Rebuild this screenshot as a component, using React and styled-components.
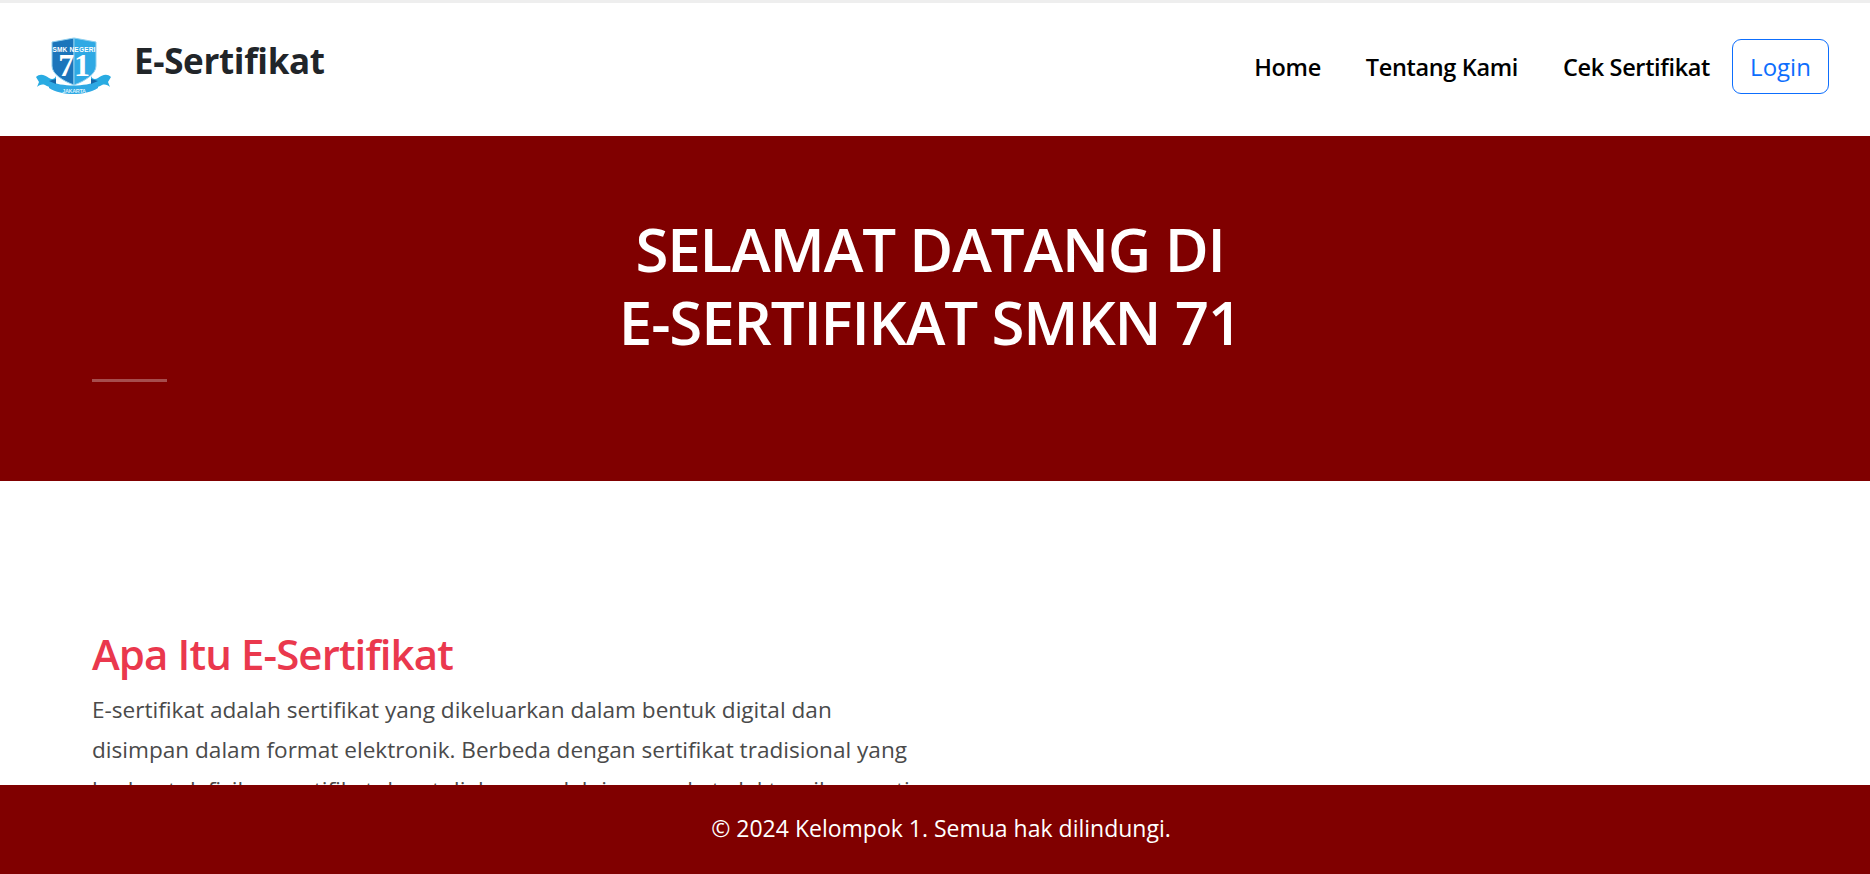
import React from 'react';
import styled, { createGlobalStyle } from 'styled-components';

const GlobalStyle = createGlobalStyle`
  * {
    box-sizing: border-box;
  }
  html,
  body {
    margin: 0;
    padding: 0;
    background-color: #fff;
    font-family: 'Open Sans', 'Noto Sans', sans-serif;
    scrollbar-width: none;
  }
  body::-webkit-scrollbar {
    display: none;
  }
`;

const Navbar = styled.nav`
  display: flex;
  align-items: center;
  justify-content: space-between;
  height: 136px;
  padding: 0 41px 0 36px;
  background-color: #fff;
  border-top: 3px solid #eeeeee;
`;

const Brand = styled.a`
  display: flex;
  align-items: center;
  gap: 23px;
  margin-top: -8px;
  color: #212529;
  font-size: 35px;
  font-weight: 700;
  letter-spacing: -0.35px;
  text-decoration: none;
`;

const BrandName = styled.span`
  margin-top: -10px;
`;

const NavList = styled.ul`
  display: flex;
  align-items: center;
  gap: 45px;
  margin: -6px 0 0;
  padding: 0;
  list-style: none;
`;

const NavLink = styled.a`
  color: #000;
  font-size: 23.5px;
  font-weight: 600;
  letter-spacing: -0.35px;
  text-decoration: none;
`;

const LoginButton = styled.a`
  display: flex;
  align-items: center;
  justify-content: center;
  width: 97px;
  height: 55px;
  margin-left: -23px;
  color: #0d6efd;
  border: 1px solid #0d6efd;
  border-radius: 9px;
  font-size: 24px;
  text-decoration: none;
`;

const Hero = styled.header`
  height: 345px;
  padding: 77px 92px 0;
  background-color: #800000;
  color: #fff;
`;

const HeroTitle = styled.h1`
  margin: 0;
  padding-right: 10px;
  color: #fff;
  font-size: 60px;
  font-weight: 600;
  line-height: 73px;
  letter-spacing: -1.15px;
  text-align: center;
`;

const HeroDivider = styled.hr`
  width: 75px;
  height: 3px;
  margin: 20px 0 0;
  border: none;
  background-color: rgba(255, 255, 255, 0.3);
`;

const Section = styled.section`
  padding: 148px 92px 140px;
  background-color: #fff;
`;

const SectionTitle = styled.h2`
  margin: 0 0 11px;
  color: #ea384d;
  font-size: 42px;
  font-weight: 600;
  line-height: 50px;
  letter-spacing: -0.9px;
`;

const SectionText = styled.p`
  width: 830px;
  margin: 0;
  color: #4a4a4a;
  font-size: 22.6px;
  line-height: 40px;
`;

const Footer = styled.footer`
  position: fixed;
  left: 0;
  right: 0;
  bottom: 0;
  display: flex;
  align-items: center;
  justify-content: center;
  height: 89px;
  padding: 0 0 4px 12px;
  background-color: #800000;
  color: #fff;
  font-size: 23px;
`;

const Logo = () => (
  <svg width="75" height="60" viewBox="0 0 75 60" aria-hidden="true">
    <path d="M0 41 C4 37 9 39 13 42 C16 44 19 43 20 40 L20 50 C17 53 13 51 9 49 C6 48 3 49 1 51 L3 46 Z" fill="#29abe2" />
    <path d="M75 41 C71 37 66 39 62 42 C59 44 56 43 55 40 L55 50 C58 53 62 51 66 49 C69 48 72 49 74 51 L72 46 Z" fill="#29abe2" />
    <path d="M38 2 L16 6 L16 30 C16 38 27 45 38 49 Z" fill="#1b75bb" stroke="#8fd0ef" strokeWidth="1" />
    <path d="M38 2 L60 6 L60 30 C60 38 49 45 38 49 Z" fill="#2fa9e4" stroke="#8fd0ef" strokeWidth="1" />
    <path d="M13 45 C26 51 49 51 62 45 L62 52 C49 60 26 60 13 52 Z" fill="#2fa9e4" />
    <path d="M13 45 L20 43 L20 48 Z M62 45 L55 43 L55 48 Z" fill="#1566a8" />
    <text x="38" y="16" fill="#fff" fontFamily="Liberation Sans" fontSize="6.500" fontWeight="700" textAnchor="middle" letterSpacing="0.2">
      SMK NEGERI
    </text>
    <text x="38" y="40" fill="#fff" fontFamily="Liberation Serif" fontSize="32" fontWeight="700" textAnchor="middle">
      71
    </text>
    <text x="38" y="57" fill="#d9f1fc" fontFamily="Liberation Sans" fontSize="5.500" textAnchor="middle">
      JAKARTA
    </text>
  </svg>
);

const App = () => (
  <>
    <GlobalStyle />
    <Navbar>
      <Brand href="#">
        <Logo />
        <BrandName>E-Sertifikat</BrandName>
      </Brand>
      <NavList>
        <li><NavLink href="#">Home</NavLink></li>
        <li><NavLink href="#">Tentang Kami</NavLink></li>
        <li><NavLink href="#">Cek Sertifikat</NavLink></li>
        <li><LoginButton href="#">Login</LoginButton></li>
      </NavList>
    </Navbar>
    <Hero>
      <HeroTitle>
        SELAMAT DATANG DI
        <br />
        E-SERTIFIKAT SMKN 71
      </HeroTitle>
      <HeroDivider />
    </Hero>
    <Section>
      <SectionTitle>Apa Itu E-Sertifikat</SectionTitle>
      <SectionText>
        E-sertifikat adalah sertifikat yang dikeluarkan dalam bentuk digital dan
        disimpan dalam format elektronik. Berbeda dengan sertifikat tradisional yang
        berbentuk fisik, e-sertifikat dapat diakses melalui perangkat elektronik seperti
        komputer, tablet, atau ponsel.
      </SectionText>
    </Section>
    <Footer>© 2024 Kelompok 1. Semua hak dilindungi.</Footer>
  </>
);

export default App;
